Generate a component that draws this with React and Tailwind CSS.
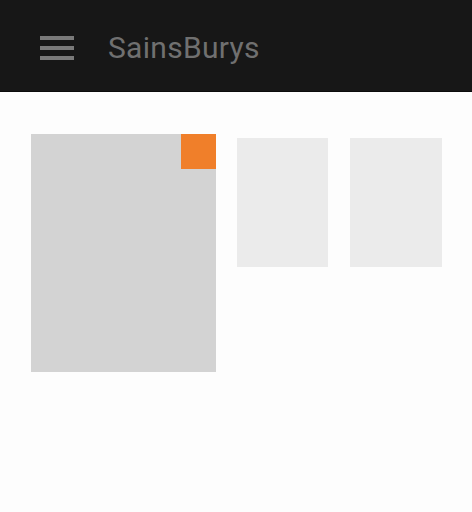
export default function App() {
  return (
    <div className="w-[472px] h-[512px] bg-[#fdfdfd] overflow-hidden" style={{ fontFamily: "Roboto, sans-serif" }}>
      <header className="h-[92px] bg-[#171717] flex items-center border-b border-[#0c0c0c]">
        <div className="ml-[40px] mt-[5px] w-[34px] flex flex-col gap-[6px]">
          <div className="h-[4px] bg-[#7a7a7a]" />
          <div className="h-[4px] bg-[#7a7a7a]" />
          <div className="h-[4px] bg-[#7a7a7a]" />
        </div>
        <div className="ml-[34px] mt-[5px] text-[30px] tracking-[0.3px] leading-none text-[#707070]">SainsBurys</div>
      </header>
      <div className="flex items-start pl-[31px] pt-[42px]">
        <div className="relative w-[185px] h-[238px] bg-[#d3d3d3]">
          <div className="absolute top-0 right-0 w-[35px] h-[35px] bg-[#f07f2a]" />
        </div>
        <div className="ml-[21px] mt-[4px] w-[91px] h-[129px] bg-[#ebebeb]" />
        <div className="ml-[22px] mt-[4px] w-[92px] h-[129px] bg-[#ebebeb]" />
      </div>
    </div>
  );
}
